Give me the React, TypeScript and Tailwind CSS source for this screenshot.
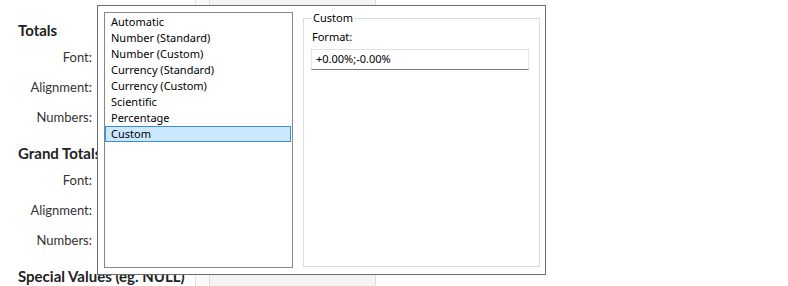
import React from "react";

const items = [
  "Automatic",
  "Number (Standard)",
  "Number (Custom)",
  "Currency (Standard)",
  "Currency (Custom)",
  "Scientific",
  "Percentage",
  "Custom",
];

function Row({ label }: { label: string }) {
  return (
    <div className="h-[30px] flex items-center">
      <div className="w-[92px] text-right text-[13px] text-[#333]">{label}</div>
    </div>
  );
}

function Heading({ children, mt }: { children: React.ReactNode; mt: string }) {
  return (
    <div className={`${mt} h-[20px] leading-[20px] pl-[18px] text-[15px] font-bold text-[#222] whitespace-nowrap`}>
      {children}
    </div>
  );
}

export default function App() {
  return (
    <div
      className="relative w-[788px] h-[286px] bg-white overflow-hidden"
      style={{ fontFamily: "Lato, 'Noto Sans', sans-serif" }}
    >
      <div className="flex h-full">
        <div className="w-[195px] shrink-0 pt-[20px]">
          <Heading mt="mt-0">Totals</Heading>
          <div className="mt-[3px]">
            <Row label="Font:" />
            <Row label="Alignment:" />
            <Row label="Numbers:" />
          </div>
          <Heading mt="mt-[10px]">Grand Totals</Heading>
          <div className="mt-[3px]">
            <Row label="Font:" />
            <Row label="Alignment:" />
            <Row label="Numbers:" />
          </div>
          <Heading mt="mt-[10px]">Special Values (eg. NULL)</Heading>
        </div>
        <div className="w-[14px] shrink-0 border-l border-[#e2e2e2] bg-[#f9f9f9]" />
        <div className="w-[167px] shrink-0 border-l border-r border-[#dcdcdc] bg-[#f3f3f3]" />
        <div className="flex-1 bg-white" />
      </div>

      <div
        className="absolute left-[97px] top-[5px] w-[449px] h-[270px] border border-[#6d6d6d] bg-white flex pt-[6px] pl-[6px]"
        style={{ fontFamily: "'Noto Sans', sans-serif" }}
      >
        <div className="w-[189px] h-[256px] border border-[#828790] pt-[1px] shrink-0">
          {items.map((it) => {
            const sel = it === "Custom";
            return (
              <div
                key={it}
                className={`h-[16px] mr-[1px] pl-[5px] flex items-center text-[11px] text-black border ${
                  sel ? "border-[#3b8ed6] bg-[#cce8ff]" : "border-transparent"
                }`}
              >
                {it}
              </div>
            );
          })}
        </div>
        <fieldset className="ml-[10px] w-[237px] h-[256px] border border-[#dcdcdc] -mt-[1px] pl-[8px] pr-[10px]">
          <legend className="ml-[0px] px-[1px] text-[11px] leading-[14px] text-black">Custom</legend>
          <div className="mt-[5px] text-[11px] leading-[14px] text-black">Format:</div>
          <div className="mt-[5px] -ml-[1px] w-[218px] h-[21px] border border-[#e3e3e3] border-b-[#7a7a7a] flex items-center pl-[4px] text-[11px] text-black">
            +0.00%;-0.00%
          </div>
        </fieldset>
      </div>
    </div>
  );
}
